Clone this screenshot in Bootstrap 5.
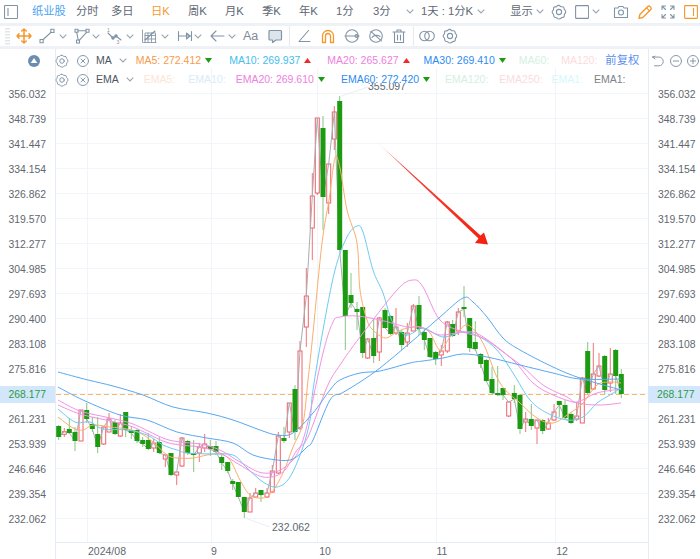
<!DOCTYPE html>
<html lang="zh-CN">
<head>
<meta charset="utf-8">
<title>纸业股</title>
<link href="https://cdn.jsdelivr.net/npm/bootstrap@5.3.0/dist/css/bootstrap.min.css" rel="stylesheet">
<style>
html,body{width:700px;height:559px;overflow:hidden;background:#fff;}
body{font-family:"Liberation Sans","Noto Sans CJK SC",sans-serif;color:#5f6b78;}
.topbar{height:23px;font-size:11.3px;white-space:nowrap;color:#5d6873;}
.sepband{height:3px;background:#eef1f6;}
.toolrow{height:20px;padding-left:5px;}
.ic{width:16px;height:16px;flex:none;display:block;fill:none;stroke:#8194a6;stroke-width:1.1;stroke-linecap:round;stroke-linejoin:round;}
.ic.org{stroke:#f5962b;}
.ic.sm{width:14px;height:14px;}
.chv{width:8px;height:5px;flex:none;display:block;fill:none;stroke:#98a6b4;stroke-width:1.1;}
.vdiv{width:1px;height:20px;background:#e6eaef;flex:none;}
.s1{margin-left:1px}.s2{margin-left:2px}.s3{margin-left:3px}.s4{margin-left:4px}.s5{margin-left:5px}.s6{margin-left:6px}.s7{margin-left:7px}.s8{margin-left:8px}.s9{margin-left:9px}.s11{margin-left:11px}.s12{margin-left:12px}.s13{margin-left:13px}.s10{margin-left:10px}.s14{margin-left:14px}.s15{margin-left:15px}.s16{margin-left:16px}.s17{margin-left:17px}.s25{margin-left:25px}
.t-a{width:44px}.t-b{width:35px}.t-c{width:40px}.t-k{width:37px}.t-n{width:33px}
.active-blue{color:#4ba5f2}.active-org{color:#f7982f}
.aa-mark{font-size:12.5px;line-height:1;color:#7d8a96;}
.chartbox{height:510px;}
.yaxis{height:510px;font-size:10.4px;color:#5f6770;flex:none;padding-top:32.5px;}
.yaxis>div{height:25px;line-height:25px;}
.yl{width:56px;text-align:right;padding-right:9px;border-right:1px solid #e6ecf3;}
.yr{width:52px;text-align:left;padding-left:9px;border-left:1px solid #e6ecf3;}
.plotsvg{width:592px;height:510px;flex:none;display:block;}
.plotsvg text{font-family:"Liberation Sans",sans-serif;font-size:10.5px;fill:#5f6770;}
.pricetag{position:absolute;top:337px;height:17px;line-height:17px;font-size:10.4px;background:#d2e7fb;color:#2f9a44;}
.pt-l{left:0;width:55px;text-align:right;padding-right:9px;}
.pt-r{left:648px;width:52px;padding-left:9px;}
.legendrow{position:absolute;left:0;width:700px;height:19px;font-size:10.5px;white-space:nowrap;}
.lr1{top:2px;padding-left:28px;}
.lr2{top:21px;padding-left:55px;}
.collapse-dot{width:12px;height:12px;display:block;flex:none;}
.tri{width:7px;height:5px;flex:none;display:block;}
.c-name{color:#4d5560;}
.c-ma5{color:#f89a4b}.c-ma10{color:#45bdf0}.c-ma20{color:#ee80de}.c-ma30{color:#2c8cf2}
.c-f1{color:#d4f0e2}.c-f2{color:#fbdcdc}.c-f3{color:#fde4d6}.c-f4{color:#d7ecf9}.c-f5{color:#d6f8fb}.c-g{color:#7d8388}
.c-fq{color:#5a8ff0;font-size:11.3px;}
.hilabel{position:absolute;left:368px;top:34px;width:40px;height:9px;overflow:hidden;font-size:10.5px;line-height:10px;color:#5f6770;}
.hilabel span{display:block;margin-top:-2px;}
</style>
</head>
<body>
<svg width="0" height="0" class="position-absolute">
<defs>
<symbol id="gear" viewBox="0 0 16 16"><path d="M8 1.4c.9 0 1.1 1 2 1.3s1.9-.3 2.6.4.3 1.6.8 2.3 1.3.9 1.3 2.6-1 1.3-1.3 2.3.3 1.900-.4 2.6-1.600.3-2.400.8-.7 1.300-2.600 1.300-1.600-.9-2.400-1.300-1.700-.1-2.400-.8-.3-1.600-.7-2.500-1.300-.9-1.300-2.400 1-1.500 1.300-2.400-.3-1.700.4-2.400 1.700-.1 2.400-.5.8-1.300 2.300-1.300z"/><circle cx="8" cy="8" r="2.600"/></symbol>
<symbol id="xc" viewBox="0 0 16 16"><circle cx="8" cy="8" r="6.300"/><path d="M5.700 5.700l4.600 4.600M10.300 5.700l-4.600 4.600"/></symbol>
<symbol id="chev" viewBox="0 0 8 5"><path d="M.7.7L4 4l3.300-3.300"/></symbol>
<symbol id="move" viewBox="0 0 16 16"><path d="M8 1v14M1 8h14M5.800 3L8 1l2.200 2M5.800 13L8 15l2.200-2M3 5.800L1 8l2 2.200M13 5.800L15 8l-2 2.200" stroke-width="1.500"/></symbol>
<symbol id="lin" viewBox="0 0 16 16"><rect x="1" y="11.500" width="3.200" height="3.200"/><rect x="11.800" y="1.300" width="3.200" height="3.200"/><path d="M4.200 11.500l7.600-7"/></symbol>
<symbol id="poly" viewBox="0 0 16 16"><rect x="1" y="1.300" width="3" height="3"/><rect x="12" y="1.300" width="3" height="3"/><rect x="2.500" y="12" width="3" height="3"/><path d="M4 2.800h8M2.700 4.300l1.500 7.700M5.200 12.300L12.600 4.300"/></symbol>
<symbol id="zig" viewBox="0 0 16 16"><path d="M1 5l5 5 3-2 5 4"/><circle cx="6" cy="10" r="1.200" fill="#8194a6"/><circle cx="9" cy="8" r="1.200" fill="#8194a6"/><text x="0" y="4" font-size="5" fill="#8194a6" stroke="none" font-family="Liberation Sans">1</text><text x="9.500" y="16" font-size="5" fill="#8194a6" stroke="none" font-family="Liberation Sans">3</text></symbol>
<symbol id="box" viewBox="0 0 16 16"><path d="M1.500 2v12.500H15M4 14.500V5h10.500v9.500M4 7.500h10.500M7 5v9.500M10.500 5v9.500M4 11h10.500" stroke-width=".9" stroke-dasharray="1.500 .8"/><path d="M4 12l10-9"/></symbol>
<symbol id="meas" viewBox="0 0 16 16"><path d="M1.500 3.500v9M14.500 3.500v9M1.500 8h13M9.500 5l3.500 3-3.500 3z"/></symbol>
<symbol id="back" viewBox="0 0 16 16"><path d="M15 8H2M7 3L2 8l5 5"/></symbol>
<symbol id="cmt" viewBox="0 0 16 16"><path d="M3 2.500h10.500a1 1 0 011 1v7.500a1 1 0 01-1 1H9l-3.500 2.500V12H3a1 1 0 01-1-1V3.500a1 1 0 011-1z" fill="#dde5ec" stroke-width="1.200"/></symbol>
<symbol id="ang" viewBox="0 0 16 16"><path d="M12.500 2.500L3 13.500h11"/></symbol>
<symbol id="mag" viewBox="0 0 16 16"><path d="M2.500 14.500V8a5.500 5.500 0 0111 0v6.500h-3V8a2.500 2.500 0 00-5 0v6.500z" stroke-width="1.300"/></symbol>
<symbol id="cline" viewBox="0 0 16 16"><circle cx="8" cy="8" r="6.300"/><path d="M1 8h14"/><circle cx="12.500" cy="8" r="1.400"/></symbol>
<symbol id="eyeoff" viewBox="0 0 16 16"><circle cx="8" cy="8" r="6.300"/><path d="M2.800 3.300l10.600 9.500M4 9.500c1-1.800 4.500-3.500 8-1"/></symbol>
<symbol id="trash" viewBox="0 0 16 16"><path d="M2 4h12M6 4V2h4v2M3.500 4v10.500h9V4M6.500 7v5M9.500 7v5"/></symbol>
<symbol id="two" viewBox="0 0 16 16"><circle cx="5.500" cy="8" r="4.800"/><circle cx="10.500" cy="8" r="4.800"/></symbol>
<symbol id="undo" viewBox="0 0 16 16"><path d="M2 3.500h7a5 5 0 010 10H4M2 3.500l2.500-1M2 3.500l2.500 2.200"/></symbol>
<symbol id="minus" viewBox="0 0 16 16"><circle cx="8" cy="8" r="6.300"/><path d="M5 8h6"/></symbol>
<symbol id="plus" viewBox="0 0 16 16"><circle cx="8" cy="8" r="6.300"/><path d="M5 8h6M8 5v6"/></symbol>
<symbol id="cam" viewBox="0 0 16 16"><path d="M1.500 4h3.500l1-1.500h4L11 4h3.500v9.500h-13z"/><circle cx="8" cy="8.500" r="2.500"/></symbol>
<symbol id="pen" viewBox="0 0 16 16"><path d="M2 14.300l.8-3.800L10.800 2.500a1.500 1.500 0 012.100 0l.9.900a1.500 1.500 0 010 2.100l-8 8z" stroke-width="1.300"/><path d="M9.500 3.800l3 3"/></symbol>
<symbol id="expand" viewBox="0 0 16 16"><path d="M2 5.500V2h3.500M14 5.500V2h-3.500M2 10.500V14h3.500M14 10.500V14h-3.500M2.500 2.500l3 3M13.500 2.500l-3 3M2.500 13.500l3-3M13.500 13.500l-3-3"/></symbol>
</defs>
</svg>

<div class="topbar d-flex align-items-center ps-1">
  <svg class="ic" viewBox="0 0 16 16"><rect x=".5" y="1.500" width="13" height="13" rx=".8"/><path d="M4 4.500v7"/></svg>
  <span class="t-a s12 active-blue">纸业股</span>
  <span class="t-b">分时</span>
  <span class="t-c">多日</span>
  <span class="t-k active-org">日K</span>
  <span class="t-k">周K</span>
  <span class="t-k">月K</span>
  <span class="t-k">季K</span>
  <span class="t-k">年K</span>
  <span class="t-k">1分</span>
  <span class="t-n">3分</span>
  <svg class="chv"><use href="#chev"/></svg>
  <span class="s7">1天 : 1分K</span>
  <svg class="chv s4"><use href="#chev"/></svg>
  <span class="s25">显示</span>
  <svg class="chv s3"><use href="#chev"/></svg>
  <svg class="ic s7"><use href="#gear"/></svg>
  <svg class="ic s8 sm" viewBox="0 0 14 14"><rect x=".6" y=".6" width="13" height="12.800" rx=".6"/></svg>
  <svg class="chv s3"><use href="#chev"/></svg>
  <svg class="ic s13"><use href="#cam"/></svg>
  <svg class="ic org s8"><use href="#pen"/></svg>
  <svg class="ic s7"><use href="#expand"/></svg>
  <svg class="ic org s8 sm" viewBox="0 0 14 14"><rect x=".6" y=".6" width="12.800" height="12.800" rx=".8"/><path d="M9.500 3.500v7"/></svg>
</div>
<div class="sepband"></div>
<div class="toolrow d-flex align-items-center">
  <svg width="5" height="17" class="flex-none d-block"><g fill="#e1e5ea"><rect y="0" width="5" height="1.500"/><rect y="3" width="5" height="1.500"/><rect y="6" width="5" height="1.500"/><rect y="9" width="5" height="1.500"/><rect y="12" width="5" height="1.500"/><rect y="15" width="5" height="1.500"/></g></svg>
  <svg class="ic org s6"><use href="#move"/></svg>
  <svg class="ic s7"><use href="#lin"/></svg><svg class="chv s4"><use href="#chev"/></svg>
  <svg class="ic s7"><use href="#poly"/></svg><svg class="chv s2"><use href="#chev"/></svg>
  <svg class="ic s7"><use href="#zig"/></svg><svg class="chv s3"><use href="#chev"/></svg>
  <svg class="ic s7"><use href="#box"/></svg><svg class="chv s4"><use href="#chev"/></svg>
  <svg class="ic s8"><use href="#meas"/></svg><svg class="chv s1"><use href="#chev"/></svg>
  <svg class="ic s7"><use href="#back"/></svg><svg class="chv s3"><use href="#chev"/></svg>
  <span class="s7 aa-mark">Aa</span>
  <svg class="ic s9"><use href="#cmt"/></svg>
  <div class="vdiv s6"></div>
  <svg class="ic s6"><use href="#ang"/></svg>
  <svg class="ic org s8"><use href="#mag"/></svg>
  <svg class="ic s8"><use href="#cline"/></svg>
  <svg class="ic s8"><use href="#eyeoff"/></svg>
  <svg class="ic s7"><use href="#trash"/></svg>
  <div class="vdiv s6"></div>
  <svg class="ic s5"><use href="#two"/></svg>
  <svg class="ic s7"><use href="#gear"/></svg>
</div>
<div class="sepband"></div>

<div class="chartbox position-relative d-flex">
  <div class="yaxis yl">
    <div>356.032</div><div>348.739</div><div>341.447</div><div>334.154</div><div>326.862</div><div>319.570</div><div>312.277</div><div>304.985</div><div>297.693</div><div>290.400</div><div>283.108</div><div>275.816</div><div></div><div>261.231</div><div>253.939</div><div>246.646</div><div>239.354</div><div>232.062</div>
  </div>
  <svg class="plotsvg" id="plot" viewBox="56 49 592 510" xmlns="http://www.w3.org/2000/svg"></svg>
  <div class="yaxis yr">
    <div>356.032</div><div>348.739</div><div>341.447</div><div>334.154</div><div>326.862</div><div>319.570</div><div>312.277</div><div>304.985</div><div>297.693</div><div>290.400</div><div>283.108</div><div>275.816</div><div></div><div>261.231</div><div>253.939</div><div>246.646</div><div>239.354</div><div>232.062</div>
  </div>
  <div class="pricetag pt-l">268.177</div>
  <div class="pricetag pt-r">268.177</div>
  <div class="hilabel"><span>355.097</span></div>

  <div class="legendrow lr1 d-flex align-items-center">
    <svg class="collapse-dot" viewBox="0 0 12 12"><circle cx="6" cy="6" r="6" fill="#6d8db0"/><path d="M6 3l3.300 5H2.700z" fill="#fff"/></svg>
    <svg class="ic sm s15"><use href="#gear"/></svg>
    <svg class="ic sm s7"><use href="#xc"/></svg>
    <span class="s6 c-name">MA</span>
    <svg class="chv s7"><use href="#chev"/></svg>
    <span class="s9 c-ma5">MA5: 272.412</span>
    <svg class="tri s4" viewBox="0 0 7 5"><path d="M0 0h7L3.500 5z" fill="#1f9a14"/></svg>
    <span class="s17 c-ma10">MA10: 269.937</span>
    <svg class="tri s4" viewBox="0 0 7 5"><path d="M0 5h7L3.500 0z" fill="#f02a2a"/></svg>
    <span class="s16 c-ma20">MA20: 265.627</span>
    <svg class="tri s4" viewBox="0 0 7 5"><path d="M0 5h7L3.500 0z" fill="#f02a2a"/></svg>
    <span class="s14 c-ma30">MA30: 269.410</span>
    <svg class="tri s4" viewBox="0 0 7 5"><path d="M0 0h7L3.500 5z" fill="#1f9a14"/></svg>
    <span class="s13 c-f1">MA60:</span>
    <span class="s12 c-f2">MA120:</span>
    <span class="s8 c-fq">前复权</span>
    <svg class="ic s12 sm"><use href="#undo"/></svg>
    <svg class="ic s4 sm"><use href="#minus"/></svg>
    <svg class="ic s3 sm"><use href="#plus"/></svg>
  </div>
  <div class="legendrow lr2 d-flex align-items-center">
    <svg class="ic sm"><use href="#gear"/></svg>
    <svg class="ic sm s7"><use href="#xc"/></svg>
    <span class="s6 c-name">EMA</span>
    <svg class="chv s7"><use href="#chev"/></svg>
    <span class="s10 c-f3">EMA5:</span>
    <span class="s13 c-f4">EMA10:</span>
    <span class="s10 c-ma20">EMA20: 269.610</span>
    <svg class="tri s4" viewBox="0 0 7 5"><path d="M0 0h7L3.500 5z" fill="#1f9a14"/></svg>
    <span class="s16 c-ma30">EMA60: 272.420</span>
    <svg class="tri s4" viewBox="0 0 7 5"><path d="M0 0h7L3.500 5z" fill="#1f9a14"/></svg>
    <span class="s15 c-f1">EMA120:</span>
    <span class="s11 c-f2">EMA250:</span>
    <span class="s9 c-f5">EMA1:</span>
    <span class="s11 c-g">EMA1:</span>
  </div>
</div>

<script>
// candles: type, x, body top, body bottom, high, low (page px)
var C=[
['g',58.7,426,437,425,440],['r',64.3,431.7,434.3,428,437],['g',69.3,429,433,418,434],['g',75,432,441,427,451],['r',81,410,441,410,441],['g',86.7,410,419,403,423],['g',92.3,424,429,417,432],['g',97.7,434,447,417,453],['r',103.7,427,444,426,445],['r',109,419,432,413,432],['g',115,422,434,420,435],['r',120.3,423,436,414,437],['g',125.7,412,430,412,437],['g',131.3,430,433,427,439],['g',137,430,441,429,443],['g',142.7,440,444,437,447],['g',148.3,440,449,433,450],['r',153.7,443,448,439,452],['g',159.3,442,453,437,454],['r',165.3,455,459,455,467],['g',171,453,475,453,476],['r',176.7,472,475,472,485],['r',182,438,466,437,467],['g',187.7,441,453,440,455],['g',193.7,453,455,440,472],['r',199.3,447,453,443,462],['r',204.7,444,448,434,452],['g',210.3,446,449,440,456],['g',216,446,452,441,455],['g',221.7,457,463,453,470],['g',227.7,462,471,462,473],['g',232.7,481,484,479,490],['g',238.3,482,497,482,497],['g',244.3,497,512,497,518],['r',250,498,512,493,512],['r',255.7,493,497,488,498],['g',261,490,495,490,502],['r',267,493,497,488,498],['r',272.3,471,492,465,493],['r',278.3,436,473,432,474],['g',284,438,441,427,443],['r',289.3,403,432,403,438],['g',295,389,432,385,440],['r',300,351,428,341,430],['r',306.3,296,327,268,347],['r',312.3,196,228,173,260],['r',317.3,118,193,118,195],['g',323,128,197,116,230],['r',328.7,164,203,164,214],['r',334.3,112,139,106,150],['g',339.7,101,250,96,250],['g',345.3,250,316,250,350],['g',351,295,303,273,308],['g',357,309,312,302,330],['g',362.7,307,353,307,358],['r',367.7,339,358,338,359],['g',373.7,338,356,318,363],['r',379.3,318,352,317,361],['g',385,310,328,308,328],['g',390.7,316,334,315,335],['r',396,327,333,308,335],['g',401.7,332,345,330,350],['r',407.3,333,342,323,347],['r',413.3,306,331,304,331],['g',419,305,329,296,335],['g',424.3,332,340,328,350],['g',430,338,357,338,358],['g',435.7,352,359,351,365],['r',441.3,351,355,345,366],['r',447.3,322,351,321,353],['g',452.7,324,336,320,337],['r',458.3,312,331,308,335],['g',464,307,309,286,317],['g',469.7,318,348,318,352],['g',475.3,342,349,321,351],['g',480.7,354,364,353,368],['g',486.3,360,381,359,382],['g',492,379,393,367,395],['g',497.7,393,395,366,396],['g',503,388,395,388,400],['r',508.7,402,416,401,417],['g',514.3,393,399,385,403],['g',520,395,429,394,434],['r',525.7,419,422,412,432],['g',531.3,419,426,404,430],['r',537,420,428,420,444],['g',542.7,420,431,419,434],['r',548.3,423,429,418,430],['r',554,412,420,404,421],['g',559.3,401,405,401,417],['g',565,405,418,400,420],['g',571,414,423,413,424],['r',576.7,416,419,402,421],['r',582.3,378,423,377,423],['g',587.7,351,393,342,394],['r',593.3,374,389,343,390],['r',599,366,376,353,377],['g',604.7,356,390,355,394],['r',610.3,374,383,348,392],['g',615.7,350,376,349,394],['g',621.3,374,394,369,398]];

var L={
ma5:{c:'#fbae6b',p:[58,417,73,428,83,430,93,425,110,427,127,429,140,433,153,442,167,455,177,458,193,458,207,455,220,454,230,460,240,480,250,495,263,498,272,492,283,473,293,447,303,423,308,380,313,333,322,243,329,200,335,158,340,168,347,210,357,243,360,290,367,320,373,330,385,338,397,332,407,328,420,327,430,333,440,350,450,337,457,333,468,325,483,343,500,383,520,403,537,418,553,423,570,413,583,403,597,385,610,382,621,383]},
ma10:{c:'#6ccbf2',p:[58,409,75,422,90,422,103,429,127,430,147,435,163,445,177,450,187,453,210,454,233,455,247,468,263,482,277,487,290,477,303,447,310,420,313,390,323,330,335,270,347,237,357,226,363,232,373,270,383,293,393,323,407,335,423,328,443,337,463,332,480,337,497,350,513,373,530,400,547,413,567,420,583,417,597,403,610,395,621,388]},
ma20:{c:'#f192e4',p:[58,400,80,411,110,418,133,424,163,438,180,442,200,444,220,450,240,462,263,473,285,467,303,440,323,353,333,322,340,317,357,316,380,320,407,327,420,327,440,335,463,332,480,335,513,360,533,383,553,395,577,403,600,405,621,403]},
ema20:{c:'#f192e4',p:[58,405,80,414,110,421,133,427,163,441,180,445,200,447,220,453,240,465,263,477,283,472,297,450,308,437,327,387,340,365,360,337,397,290,413,280,423,287,440,320,463,332,483,338,503,352,523,367,543,385,567,397,577,402,597,393,621,389]},
c30:{c:'#58a8f2',p:[58,387,83,400,120,415,147,420,177,432,207,438,233,443,253,455,277,460,293,459,307,447,313,440,330,400,342,393,360,382,380,368,410,343,440,317,463,298,473,302,487,317,503,338,520,350,553,367,580,378,621,390]},
d60:{c:'#58a8f2',p:[58,372,88,380,113,386,143,395,173,407,207,413,233,420,260,430,277,435,293,433,313,413,330,390,340,380,360,373,380,371,410,363,423,361,443,358,463,354,487,357,520,365,553,373,580,379,621,379]}
};
function smooth(p){var pts=[];for(var i=0;i<p.length;i+=2)pts.push([p[i],p[i+1]]);
 var d='M'+pts[0];for(i=0;i<pts.length-1;i++){var a=pts[Math.max(i-1,0)],b=pts[i],c=pts[i+1],e=pts[Math.min(i+2,pts.length-1)];
 d+=' C'+(b[0]+(c[0]-a[0])/6).toFixed(1)+' '+(b[1]+(c[1]-a[1])/6).toFixed(1)+' '+(c[0]-(e[0]-b[0])/6).toFixed(1)+' '+(c[1]-(e[1]-b[1])/6).toFixed(1)+' '+c[0]+' '+c[1];}return d;}
var s='<defs><linearGradient id="ag" gradientUnits="userSpaceOnUse" x1="378" y1="143" x2="488" y2="245"><stop offset="0" stop-color="#ffc9c4"/><stop offset=".25" stop-color="#f8443a"/><stop offset="1" stop-color="#f4200f"/></linearGradient></defs>';
for(var y=93;y<=518;y+=25)s+='<path d="M56 '+y+'.5H648" stroke="#f2f5f9"/>';
[87,211,317,436,555].forEach(function(x){s+='<path d="M'+x+'.5 68V542" stroke="#f1f5f9"/>';});
s+='<path d="M56 542.5H648" stroke="#e6ecf3"/>';
s+='<path d="M56 394.5H648" stroke="#fbb56e" stroke-dasharray="5 3"/>';
var cl=[];
C.forEach(function(k){cl.push(k[1]+','+(k[0]=='g'?k[3]:k[2]));
 if(k[0]=='r'){s+='<path d="M'+k[1]+' '+k[4]+'V'+k[5]+'" stroke="#f0727a"/><rect x="'+(k[1]-2)+'" y="'+k[2]+'" width="4" height="'+(k[3]-k[2])+'" fill="#fff" stroke="#f0616a"/>';}});
s+='<polyline points="'+cl.join(' ')+'" fill="none" stroke="#a9adb1" stroke-width="1"/>';
C.forEach(function(k){if(k[0]=='g'){s+='<path d="M'+k[1]+' '+k[4]+'V'+k[5]+'" stroke="#86c581"/><rect x="'+(k[1]-2.5)+'" y="'+k[2]+'" width="5" height="'+(k[3]-k[2])+'" fill="#1c9a12"/>';}});
for(var n in L)s+='<path d="'+smooth(L[n].p)+'" fill="none" stroke="'+L[n].c+'"/>';
s+='<polygon points="378,143 480.5,235.500 484,232.500 488,244.500 475,243 478.500,238.500" fill="url(#ag)"/>';
s+='<path d="M341 96L368 87" stroke="#e9eef4"/><path d="M245 518L270 527" stroke="#e9eef4"/>';
s+='<text x="272" y="531">232.062</text>';
s+='<text x="107" y="555" text-anchor="middle">2024/08</text><text x="214" y="555" text-anchor="middle">9</text><text x="325" y="555" text-anchor="middle">10</text><text x="442" y="555" text-anchor="middle">11</text><text x="562" y="555" text-anchor="middle">12</text>';
document.getElementById('plot').innerHTML=s;
</script>
<script src="https://cdn.jsdelivr.net/npm/bootstrap@5.3.0/dist/js/bootstrap.bundle.min.js"></script>
</body>
</html>
